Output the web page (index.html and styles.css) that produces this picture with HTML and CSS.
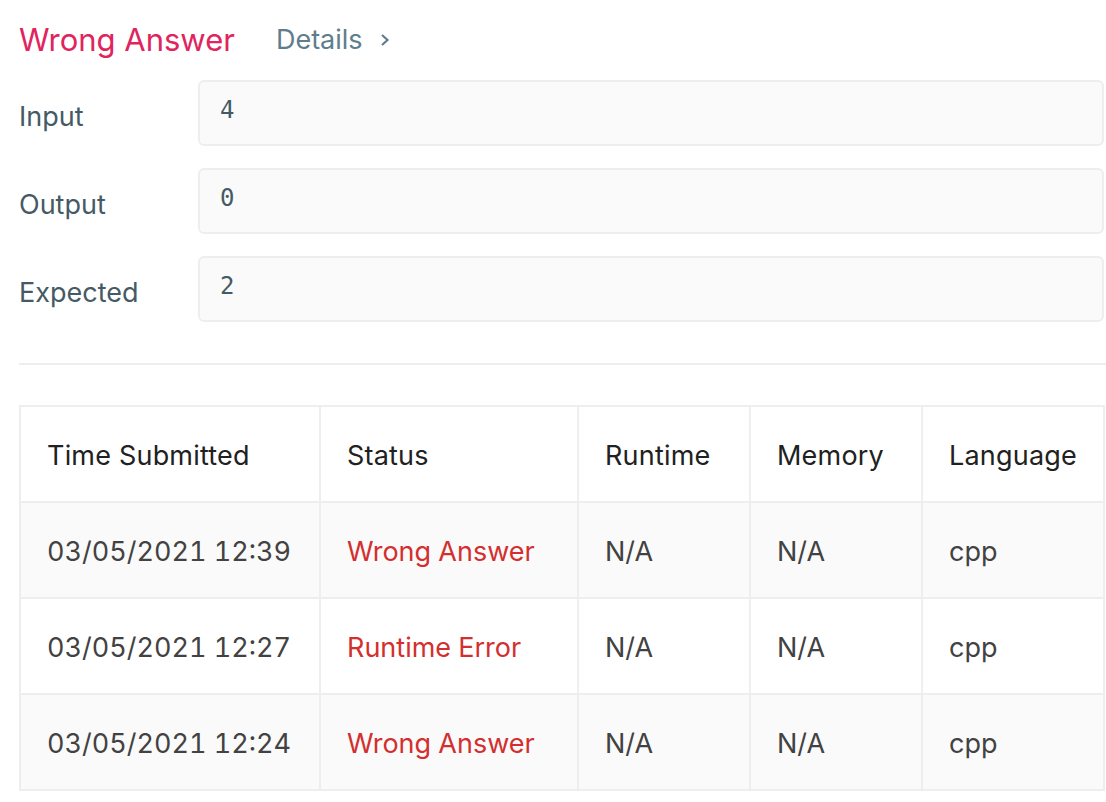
FILE: index.html
```html
<!DOCTYPE html>
<html>
<head>
<meta charset="utf-8">
<link rel="stylesheet" href="styles.css">
</head>
<body>
<div class="page">
  <div class="result-head">
    <span class="verdict">Wrong Answer</span>
    <a class="details">Details <span class="chev"><svg width="12" height="18" viewBox="0 0 12 18"><path d="M3 4 L8.5 9 L3 14" fill="none" stroke="#607d8b" stroke-width="2.2"/></svg></span></a>
  </div>
  <div class="io">
    <div class="io-row"><div class="io-label">Input</div><div class="io-box">4</div></div>
    <div class="io-row"><div class="io-label">Output</div><div class="io-box">0</div></div>
    <div class="io-row"><div class="io-label">Expected</div><div class="io-box">2</div></div>
  </div>
  <div class="divider"></div>
  <table class="subs">
    <colgroup>
      <col class="c1"><col class="c2"><col class="c3"><col class="c4"><col class="c5">
    </colgroup>
    <thead>
      <tr><th>Time Submitted</th><th>Status</th><th>Runtime</th><th>Memory</th><th>Language</th></tr>
    </thead>
    <tbody>
      <tr class="alt"><td>03/05/2021 12:39</td><td class="bad">Wrong Answer</td><td>N/A</td><td>N/A</td><td>cpp</td></tr>
      <tr><td>03/05/2021 12:27</td><td class="bad">Runtime Error</td><td>N/A</td><td>N/A</td><td>cpp</td></tr>
      <tr class="alt"><td>03/05/2021 12:24</td><td class="bad">Wrong Answer</td><td>N/A</td><td>N/A</td><td>cpp</td></tr>
    </tbody>
  </table>
</div>
</body>
</html>
```

FILE: styles.css
```css
* { box-sizing: border-box; }
html, body { margin: 0; padding: 0; background: #fff; }
body { font-family: Inter, "Open Sans", "Liberation Sans", sans-serif; }
.page { padding: 0 0 0 18px; width: 1106px; overflow: hidden; }

.result-head {
  display: flex;
  align-items: center;
  height: 80px;
}
.verdict {
  color: #e0245e;
  font-size: 31px;
  font-weight: 400;
  line-height: 1;
  margin-left: 1px;
  margin-top: -2px;
}
.details {
  color: #607d8b;
  font-size: 27px;
  margin-left: 41px;
  margin-top: -2px;
  display: flex;
  align-items: center;
  gap: 16px;
}
.chev { display: flex; margin-top: 2px; }

.io { display: flex; flex-direction: column; gap: 22px; padding-right: 2px; }
.io-row { display: flex; align-items: center; }
.io-label {
  width: 180px;
  flex: none;
  padding-left: 1px;
  padding-top: 6px;
  color: #455a64;
  font-size: 27px;
}
.io-box {
  flex: 1;
  height: 66px;
  background: #fafafa;
  border: 2px solid #eeeeee;
  border-radius: 6px;
  padding: 0 20px;
  display: flex;
  align-items: center;
  padding-bottom: 6px;
  font-family: "DejaVu Sans Mono", "Liberation Mono", monospace;
  font-size: 24px;
  color: #455a64;
}

.divider {
  height: 2px;
  background: #eeeeee;
  margin: 41px 0 40px 1px;
}

.subs {
  border-collapse: collapse;
  width: 1086px;
  border: 2px solid #eeeeee;
  margin-left: 1px;
}
.subs col.c1 { width: 300px; }
.subs col.c2 { width: 258px; }
.subs col.c3 { width: 172px; }
.subs col.c4 { width: 172px; }
.subs th, .subs td {
  border: 2px solid #eeeeee;
  height: 96px;
  padding: 2px 0 0 26px;
  text-align: left;
  font-size: 27px;
  white-space: nowrap;
}
.subs th { font-weight: 400; color: #212121; letter-spacing: 0.2px; }
.subs td { color: #424242; font-variant-numeric: tabular-nums; }
.subs tr.alt td { background: #fafafa; }
.subs td.bad { color: #d32f2f; }
```
